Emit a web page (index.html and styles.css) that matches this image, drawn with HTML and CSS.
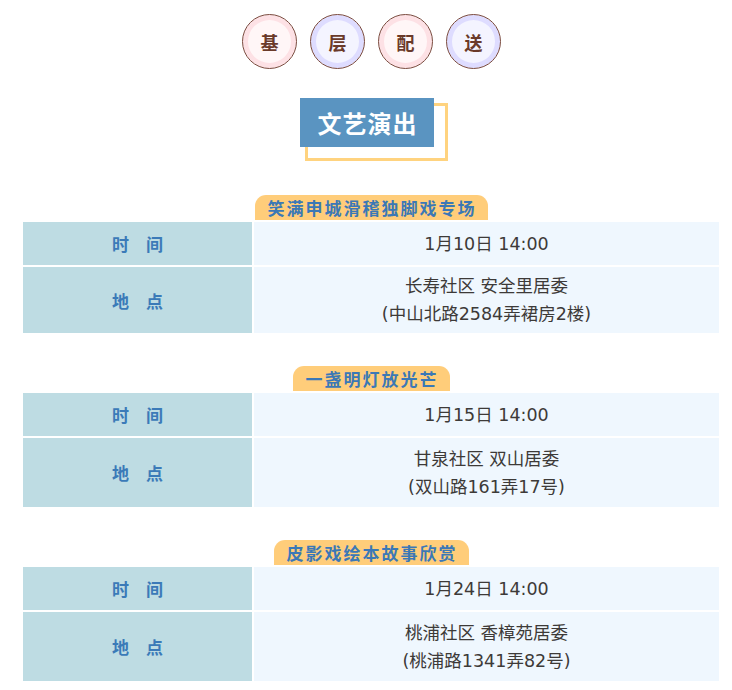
FILE: index.html
```html
<!DOCTYPE html>
<html lang="zh">
<head>
<meta charset="utf-8">
<link rel="stylesheet" href="styles.css">
</head>
<body>
<div class="page">
  <div class="badges">
    <span class="badge pink">基</span>
    <span class="badge lav">层</span>
    <span class="badge pink">配</span>
    <span class="badge lav">送</span>
  </div>
  <div class="title-wrap">
    <div class="title">文艺演出</div>
  </div>

  <section class="show">
    <div class="tab-row"><div class="tab">笑满申城滑稽独脚戏专场</div></div>
    <div class="grid">
      <div class="label row1">时　间</div>
      <div class="value row1">1月10日 14:00</div>
      <div class="label row2 short">地　点</div>
      <div class="value row2 short">长寿社区 安全里居委<br>(中山北路2584弄裙房2楼)</div>
    </div>
  </section>

  <section class="show">
    <div class="tab-row"><div class="tab">一盏明灯放光芒</div></div>
    <div class="grid">
      <div class="label row1">时　间</div>
      <div class="value row1">1月15日 14:00</div>
      <div class="label row2">地　点</div>
      <div class="value row2">甘泉社区 双山居委<br>(双山路161弄17号)</div>
    </div>
  </section>

  <section class="show">
    <div class="tab-row"><div class="tab">皮影戏绘本故事欣赏</div></div>
    <div class="grid">
      <div class="label row1">时　间</div>
      <div class="value row1">1月24日 14:00</div>
      <div class="label row2">地　点</div>
      <div class="value row2">桃浦社区 香樟苑居委<br>(桃浦路1341弄82号)</div>
    </div>
  </section>
</div>
</body>
</html>
```

FILE: styles.css
```css
* { box-sizing: border-box; }
html, body { margin: 0; padding: 0; background: #fff; }
body {
  width: 732px;
  height: 690px;
  overflow: hidden;
  font-family: "Noto Sans CJK SC", "Noto Sans", sans-serif;
}
.page {
  width: 696px;
  margin-left: 23px;
  padding-top: 14px;
}
.badges {
  display: flex;
  justify-content: center;
  gap: 13px;
  padding-left: 1px;
}
.badge {
  width: 55px;
  height: 55px;
  border-radius: 50%;
  border: 1px solid #7a4a3e;
  display: flex;
  align-items: center;
  justify-content: center;
  font-size: 18px;
  font-weight: 700;
  color: #6a3a2a;
}
.badge.pink { background: #fff6f7; box-shadow: inset 0 0 0 5px #fde1e5; }
.badge.lav { background: #f4f4ff; box-shadow: inset 0 0 0 5px #dedcff; }

.title-wrap {
  display: flex;
  justify-content: center;
  margin-top: 29px;
  padding-right: 8px;
  isolation: isolate;
}
.title {
  position: relative;
  width: 134px;
  height: 49px;
  background: #5a94c1;
  color: #fff;
  font-size: 24px;
  font-weight: 700;
  letter-spacing: 1px;
  text-indent: 1px;
  display: flex;
  align-items: center;
  justify-content: center;
}
.title::before {
  content: "";
  position: absolute;
  left: 5px;
  top: 5px;
  width: 137px;
  height: 52px;
  border: 3px solid #ffd37f;
  z-index: -1;
}

.show { margin-top: 33px; }
.show:first-of-type { margin-top: 48px; }

.tab-row {
  display: flex;
  justify-content: center;
  margin-bottom: 2px;
}
.tab {
  height: 25px;
  padding: 0 11px 0 13px;
  background: #ffcd7a;
  border-radius: 11px 11px 0 0;
  color: #3b78b6;
  font-size: 17px;
  font-weight: 700;
  letter-spacing: 2px;
  line-height: 25px;
}

.grid {
  display: grid;
  grid-template-columns: 229px 1fr;
  gap: 2px;
}
.label, .value {
  display: flex;
  align-items: center;
  justify-content: center;
  text-align: center;
}
.label {
  background: #bedce3;
  color: #3b7ab8;
  font-size: 17px;
  font-weight: 700;
}
.value {
  background: #eff7fe;
  color: #3d3a38;
  font-family: "DejaVu Sans", "Noto Sans CJK SC", sans-serif;
  font-size: 17.5px;
  line-height: 28px;
}
.row1 { height: 43px; }
.row2 { height: 69px; }
.row2.short { height: 66px; }
```
